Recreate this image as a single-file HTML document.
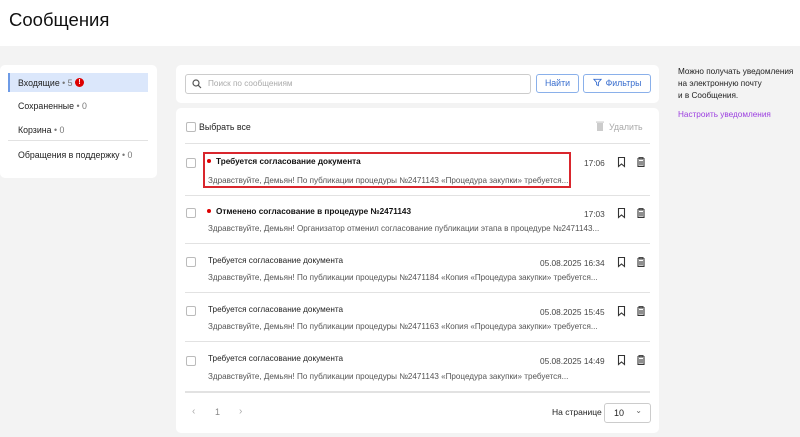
<!DOCTYPE html>
<html><head><meta charset="utf-8"><style>
*{box-sizing:border-box;margin:0;padding:0}
body{width:800px;height:437px;background:#f3f3f3;font-family:"Liberation Sans",sans-serif;position:relative;overflow:hidden;color:#222}
.hdr{position:absolute;left:0;top:0;width:800px;height:46px;background:#fff}
.hdr h1{position:absolute;left:9px;top:9px;font-size:18.5px;font-weight:400;color:#111}
.card{position:absolute;background:#fff;border-radius:5px}
.abs{position:absolute;white-space:nowrap}
.s10{font-size:8.8px}
.cb{position:absolute;width:10px;height:10px;border:1px solid #bbb;border-radius:2px;background:#fff}
.hr{position:absolute;height:1px;background:#e2e2e2}
.btn{position:absolute;border:1px solid #8ab0ea;border-radius:3px;color:#3a6fcf;font-size:8.8px;text-align:center;line-height:17px;height:19px}
.t{font-weight:bold;font-size:8.2px;color:#111}
.p{font-size:8.1px;color:#555}
.d{font-size:8.3px;color:#444}
.dot{position:absolute;width:4px;height:4px;border-radius:2px;background:#d00}
</style></head><body>
<div class="hdr"><h1>Сообщения</h1></div>

<div class="card" style="left:0;top:65px;width:157px;height:113px"></div>
<div class="abs" style="left:8px;top:73px;width:140px;height:19px;background:#dbe7fb;border-left:2px solid #6e9be6"></div>
<div class="abs s10" style="left:18px;top:78px">Входящие <span style="color:#777">• 5</span></div>
<div class="abs" style="left:75px;top:78px;width:9px;height:9px;border-radius:5px;background:#d00;color:#fff;font-size:7px;text-align:center;line-height:9px;font-weight:bold">!</div>
<div class="abs s10" style="left:18px;top:101px">Сохраненные <span style="color:#777">• 0</span></div>
<div class="abs s10" style="left:18px;top:125px">Корзина <span style="color:#777">• 0</span></div>
<div class="hr" style="left:8px;top:140px;width:140px"></div>
<div class="abs s10" style="left:18px;top:150px">Обращения в поддержку <span style="color:#777">• 0</span></div>

<div class="card" style="left:176px;top:65px;width:483px;height:38px"></div>
<div class="abs" style="left:185px;top:74px;width:346px;height:20px;border:1px solid #ccc;border-radius:3px"></div>
<svg class="abs" style="left:192px;top:79px" width="10" height="10" viewBox="0 0 10 10"><circle cx="4" cy="4" r="3" fill="none" stroke="#555" stroke-width="1.2"/><path d="M6.3 6.3 9 9" stroke="#555" stroke-width="1.2"/></svg>
<div class="abs" style="left:208px;top:79px;font-size:8.2px;color:#aaa">Поиск по сообщениям</div>
<div class="btn" style="left:536px;top:74px;width:43px">Найти</div>
<div class="btn" style="left:583px;top:74px;width:68px"><svg width="9" height="9" viewBox="0 0 10 10" style="vertical-align:-1px;margin-right:4px"><path d="M1 1.5h8L6 5v3.5L4 7.5V5z" fill="none" stroke="#3a6fcf" stroke-width="1"/></svg>Фильтры</div>

<div class="card" style="left:176px;top:108px;width:483px;height:325px"></div>
<div class="cb" style="left:186px;top:122px"></div>
<div class="abs s10" style="left:199px;top:122px">Выбрать все</div>
<svg class="abs" style="left:596px;top:121px" width="8" height="10" viewBox="0 0 8 10"><rect x="1" y="2" width="6" height="8" fill="#ccc"/><rect x="0" y="0.5" width="8" height="1.2" fill="#ccc"/></svg>
<div class="abs" style="left:609px;top:122px;font-size:8.8px;color:#aaa">Удалить</div>
<div class="hr" style="left:185px;top:143px;width:465px"></div>

<div class="abs" style="left:203px;top:152px;width:368px;height:36px;border:2px solid #d9262d"></div>

<div class="cb" style="left:186px;top:158px"></div><div class="dot" style="left:207px;top:159px"></div>
<div class="abs t" style="left:216px;top:157px">Требуется согласование документа</div>
<div class="abs p" style="left:208px;top:176px">Здравствуйте, Демьян! По публикации процедуры №2471143 «Процедура закупки» требуется...</div>
<div class="abs d" style="left:584px;top:158px">17:06</div>
<div class="hr" style="left:185px;top:195px;width:465px"></div>

<div class="cb" style="left:186px;top:208px"></div><div class="dot" style="left:207px;top:209px"></div>
<div class="abs t" style="left:216px;top:207px">Отменено согласование в процедуре №2471143</div>
<div class="abs p" style="left:208px;top:224px">Здравствуйте, Демьян! Организатор отменил согласование публикации этапа в процедуре №2471143...</div>
<div class="abs d" style="left:584px;top:209px">17:03</div>
<div class="hr" style="left:185px;top:243px;width:465px"></div>

<div class="cb" style="left:186px;top:257px"></div>
<div class="abs t" style="left:208px;top:256px;font-weight:normal;color:#222">Требуется согласование документа</div>
<div class="abs p" style="left:208px;top:273px">Здравствуйте, Демьян! По публикации процедуры №2471184 «Копия «Процедура закупки» требуется...</div>
<div class="abs d" style="left:540px;top:258px">05.08.2025 16:34</div>
<div class="hr" style="left:185px;top:292px;width:465px"></div>

<div class="cb" style="left:186px;top:306px"></div>
<div class="abs t" style="left:208px;top:305px;font-weight:normal;color:#222">Требуется согласование документа</div>
<div class="abs p" style="left:208px;top:322px">Здравствуйте, Демьян! По публикации процедуры №2471163 «Копия «Процедура закупки» требуется...</div>
<div class="abs d" style="left:540px;top:307px">05.08.2025 15:45</div>
<div class="hr" style="left:185px;top:341px;width:465px"></div>

<div class="cb" style="left:186px;top:356px"></div>
<div class="abs t" style="left:208px;top:354px;font-weight:normal;color:#222">Требуется согласование документа</div>
<div class="abs p" style="left:208px;top:372px">Здравствуйте, Демьян! По публикации процедуры №2471143 «Процедура закупки» требуется...</div>
<div class="abs d" style="left:540px;top:356px">05.08.2025 14:49</div>
<div class="hr" style="left:185px;top:391px;width:465px;height:2px"></div>

<svg class="abs" style="left:617px;top:157px" width="30" height="235" viewBox="0 0 30 235">
<g id="ic" fill="none" stroke="#333" stroke-width="1.1"><path d="M1.5 0.5h6v9L4.5 7 1.5 9.5z"/><path d="M20 2h8M22 2V0.7h4V2M21 3v6.5h6V3M23 4v4.5M25 4v4.5"/></g>
<use href="#ic" y="51"/><use href="#ic" y="100"/><use href="#ic" y="149"/><use href="#ic" y="198"/>
</svg>

<div class="abs" style="left:192px;top:406px;font-size:10px;color:#aaa">‹</div>
<div class="abs" style="left:215px;top:407px;font-size:9px;color:#888">1</div>
<div class="abs" style="left:239px;top:406px;font-size:10px;color:#aaa">›</div>
<div class="abs" style="left:552px;top:407px;font-size:8.5px;color:#222">На странице</div>
<div class="abs" style="left:604px;top:403px;width:47px;height:20px;border:1px solid #ccc;border-radius:3px;font-size:9px;line-height:18px;padding-left:9px">10<span style="position:absolute;right:8px;top:-2px;color:#666;font-size:8px">⌄</span></div>

<div class="abs" style="left:678px;top:66px;font-size:8.2px;line-height:12px;color:#222">Можно получать уведомления<br>на электронную почту<br>и в Сообщения.</div>
<div class="abs" style="left:678px;top:110px;font-size:8.2px;color:#9b3de0">Настроить уведомления</div>
</body></html>
